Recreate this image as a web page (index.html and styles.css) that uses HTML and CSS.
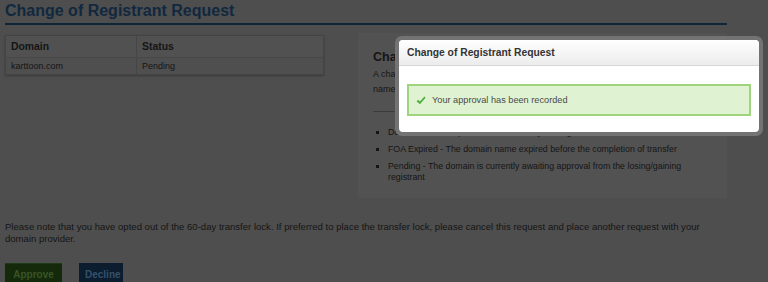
FILE: index.html
```html
<!DOCTYPE html>
<html lang="en">
<head>
    <meta charset="UTF-8">
    <meta name="viewport" content="width=device-width, initial-scale=1.0">
    <title>Change of Registrant Request</title>
    <link rel="stylesheet" href="styles.css">
</head>
<body>
    <div class="page">
        <h1 class="page-title">Change of Registrant Request</h1>

        <div class="columns">
            <table class="request-table">
                <tr>
                    <th class="col-domain">Domain</th>
                    <th>Status</th>
                </tr>
                <tr>
                    <td>karttoon.com</td>
                    <td>Pending</td>
                </tr>
            </table>

            <div class="info-panel">
                <h2>Change of Registrant Status</h2>
                <p>A change of registrant has been requested for the domain listed. The domain<br>name status is shown below.</p>
                <hr>
                <ul>
                    <li>Declined - The request was declined by the registrant</li>
                    <li>FOA Expired - The domain name expired before the completion of transfer</li>
                    <li>Pending - The domain is currently awaiting approval from the losing/gaining registrant</li>
                </ul>
            </div>
        </div>

        <p class="note">Please note that you have opted out of the 60-day transfer lock. If preferred to place the transfer lock, please cancel this request and place another request with your domain provider.</p>

        <div class="actions">
            <button class="btn btn-approve">Approve</button>
            <button class="btn btn-decline">Decline</button>
        </div>
    </div>

    <div class="modal">
        <div class="modal-inner">
            <div class="modal-header">Change of Registrant Request</div>
            <div class="modal-body">
                <div class="alert-success">
                    <svg class="check" width="10" height="9" viewBox="0 0 10 9">
                        <path d="M0.6 5.2 L2.2 3.8 L3.9 5.6 L8.4 0.6 L9.6 1.8 L3.9 8.2 Z" fill="#4fae3c"/>
                    </svg>
                    Your approval has been recorded
                </div>
            </div>
        </div>
    </div>
</body>
</html>
```

FILE: styles.css
```css
body {
    margin: 0;
    background-color: #4e4e4e;
    font-family: "Liberation Sans", Arial, sans-serif;
    color: #151515;
}
.page {
    width: 722px;
    padding: 0 5px;
}
.page-title {
    margin: 0;
    font-size: 16px;
    line-height: 20px;
    padding-top: 1px;
    padding-bottom: 2px;
    color: #11283f;
    border-bottom: 2px solid #0f2538;
}
.columns {
    display: flex;
    align-items: flex-start;
    gap: 34px;
    margin-top: 9px;
}
.request-table {
    width: 319px;
    flex: none;
    margin-top: 1px;
    border-collapse: collapse;
    border: 1px solid #444;
    box-shadow: 0 1px 2px rgba(0, 0, 0, 0.25);
    font-size: 9px;
}
.request-table th {
    text-align: left;
    font-size: 10.4px;
    height: 21px;
    padding: 0 5px;
    background-color: #515151;
    border-bottom: 1px solid #474747;
}
.request-table td {
    height: 16px;
    padding: 0 5px;
    background-color: #4f4f4f;
}
.request-table .col-domain {
    width: 120px;
}
.request-table th + th,
.request-table td + td {
    border-left: 1px solid #454545;
}
.info-panel {
    flex: 1;
    height: 165px;
    margin-top: -1px;
    box-sizing: border-box;
    padding: 16px 15px 0 15px;
    background-color: #525252;
    overflow: hidden;
    font-size: 9px;
}
.info-panel h2 {
    margin: 0;
    font-size: 12.5px;
    line-height: 16px;
    white-space: nowrap;
}
.info-panel p {
    margin: 2px 0 0;
    line-height: 15px;
    white-space: nowrap;
}
.info-panel hr {
    border: none;
    border-top: 1px solid #3c3c3c;
    margin: 14px 0 0;
}
.info-panel ul {
    margin: 15px 0 0;
    padding-left: 15px;
    list-style: square;
    font-size: 8.8px;
}
.info-panel li {
    line-height: 11px;
    margin-bottom: 6px;
}
.note {
    margin: 23px 0 0;
    font-size: 9.55px;
    line-height: 12px;
}
.actions {
    display: flex;
    gap: 17px;
    margin-top: 18px;
}
.btn {
    border: none;
    height: 22px;
    font-family: "Liberation Sans", Arial, sans-serif;
    font-weight: bold;
    font-size: 10px;
    cursor: pointer;
}
.btn-approve {
    width: 57px;
    background-color: #142a0a;
    color: #385528;
    border-top: 1px solid #1f3a17;
}
.btn-decline {
    width: 44px;
    background-color: #0b1d2e;
    color: #37516a;
}

/* confirmation dialog */
.modal {
    position: absolute;
    left: 395px;
    top: 36px;
    width: 360px;
    padding: 4px;
    border-radius: 7px;
    background-color: #737373;
}
.modal-inner {
    background-color: #fff;
    border-radius: 4px;
    overflow: hidden;
}
.modal-header {
    height: 25px;
    line-height: 25px;
    padding: 0 8px;
    font-size: 10.3px;
    font-weight: bold;
    color: #333;
    background: linear-gradient(#fff, #ececec);
    border-bottom: 1px solid #d6d6d6;
}
.modal-body {
    padding: 18px 8px 16px;
}
.alert-success {
    display: flex;
    align-items: center;
    gap: 6px;
    height: 28px;
    padding: 0 7px;
    background-color: #dff2d2;
    border: 2px solid #9fd37d;
    font-size: 9.2px;
    color: #4a4a4a;
}
```
